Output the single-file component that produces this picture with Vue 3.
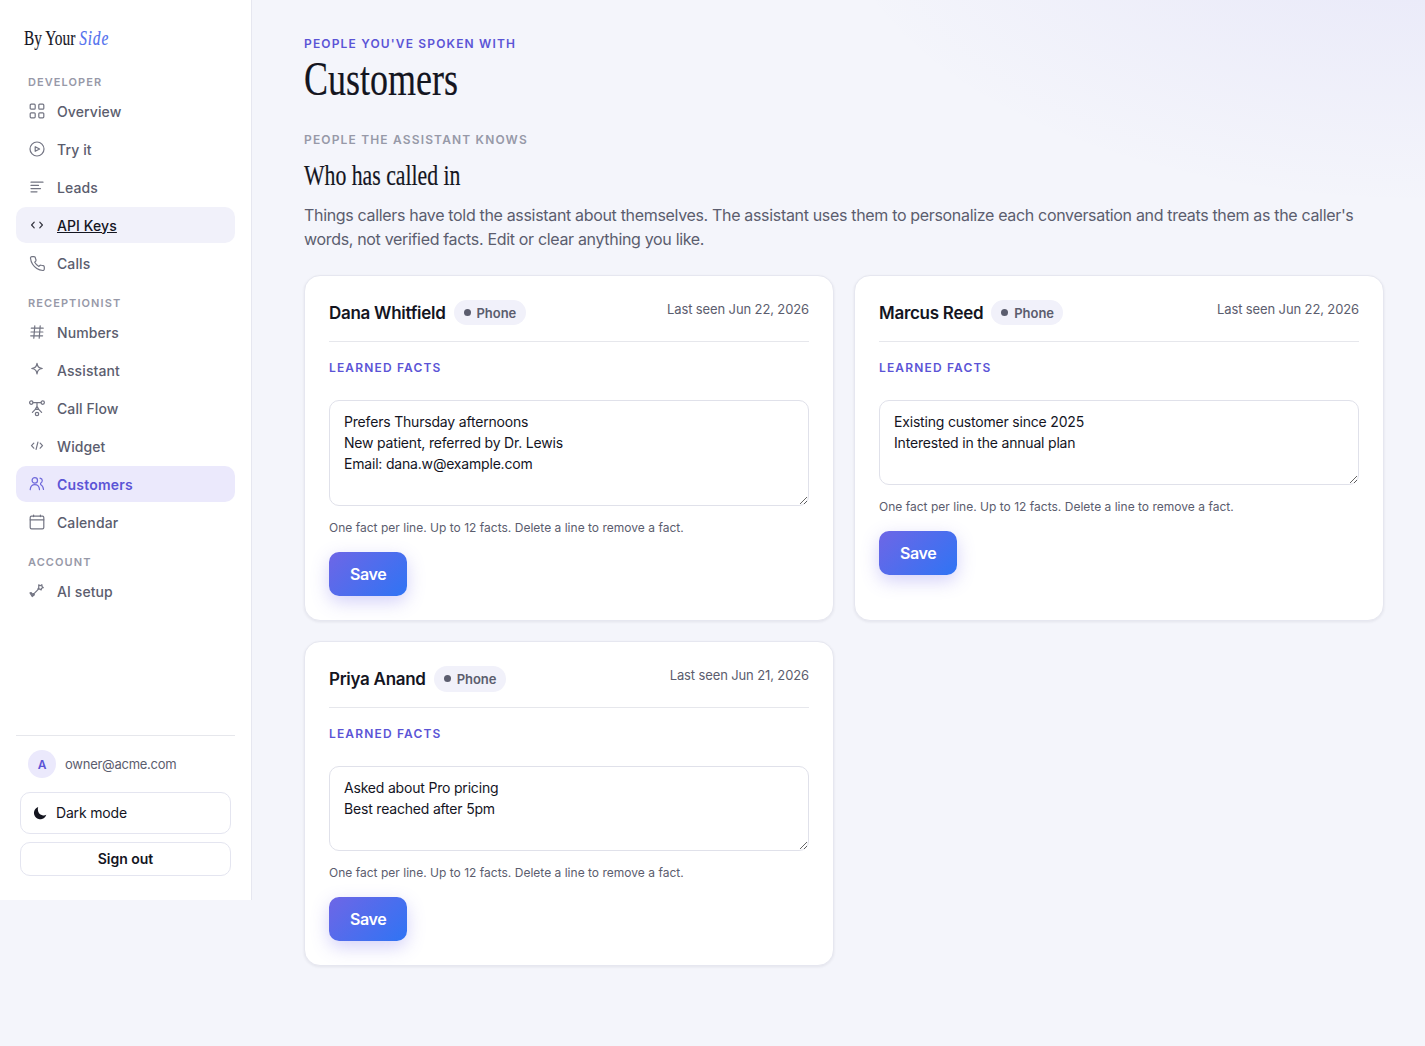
<template>
  <div class="app-shell">
    <aside class="sidebar">
      <div class="brand"><span class="brand-text">By Your <em>Side</em></span></div>

      <nav class="nav">
        <div v-for="group in navGroups" :key="group.label" class="nav-group">
          <div class="nav-label">{{ group.label }}</div>
          <a
            v-for="item in group.items"
            :key="item.name"
            class="nav-item"
            :class="{ active: item.name === current, focused: item.name === focused }"
            @click="current = item.name"
          >
            <svg class="nav-icon" viewBox="0 0 18 18" v-html="icons[item.icon]"></svg>
            <span>{{ item.name }}</span>
          </a>
        </div>
      </nav>

      <div class="account">
        <div class="account-user">
          <span class="avatar">A</span>
          <span class="email">owner@acme.com</span>
        </div>
        <button class="theme-btn">
          <svg class="moon" viewBox="0 0 14 14">
            <path d="M5.2.9A6.3 6.3 0 1 0 13.3 8.7 4.7 4.7 0 0 1 9.3 9.2C5.8 8.6 4 4.6 5.2.9z" fill="currentColor" />
          </svg>
          <span>Dark mode</span>
        </button>
        <button class="signout-btn">Sign out</button>
      </div>
    </aside>

    <main class="main">
      <div class="eyebrow">People you've spoken with</div>
      <h1><span>Customers</span></h1>
      <div class="eyebrow muted">People the assistant knows</div>
      <h2><span>Who has called in</span></h2>
      <p class="lead">
        Things callers have told the assistant about themselves. The assistant uses them to personalize each conversation and treats them as the caller's words, not verified facts. Edit or clear anything you like.
      </p>

      <div class="cards">
        <section v-for="c in customers" :key="c.name" class="card">
          <header class="card-head">
            <div class="who">
              <h3>{{ c.name }}</h3>
              <span class="pill"><i class="dot"></i>Phone</span>
            </div>
            <span class="seen">Last seen {{ c.seen }}</span>
          </header>
          <div class="facts-label">Learned facts</div>
          <textarea v-model="c.facts" :rows="c.rows" spellcheck="false"></textarea>
          <div class="hint">One fact per line. Up to 12 facts. Delete a line to remove a fact.</div>
          <button class="save-btn">Save</button>
        </section>
      </div>
    </main>
  </div>
</template>

<script setup>
import { ref } from 'vue';

const current = ref('Customers');
const focused = ref('API Keys');

const navGroups = [
  {
    label: 'Developer',
    items: [
      { name: 'Overview', icon: 'grid' },
      { name: 'Try it', icon: 'play' },
      { name: 'Leads', icon: 'lines' },
      { name: 'API Keys', icon: 'brackets' },
      { name: 'Calls', icon: 'phone' }
    ]
  },
  {
    label: 'Receptionist',
    items: [
      { name: 'Numbers', icon: 'hash' },
      { name: 'Assistant', icon: 'spark' },
      { name: 'Call Flow', icon: 'flow' },
      { name: 'Widget', icon: 'code' },
      { name: 'Customers', icon: 'people' },
      { name: 'Calendar', icon: 'calendar' }
    ]
  },
  {
    label: 'Account',
    items: [{ name: 'AI setup', icon: 'wand' }]
  }
];

const icons = {
  grid: '<rect x="2.2" y="2.2" width="5" height="5" rx="1"/><rect x="10.8" y="2.2" width="5" height="5" rx="1"/><rect x="2.2" y="10.8" width="5" height="5" rx="1"/><rect x="10.8" y="10.8" width="5" height="5" rx="1"/>',
  play: '<circle cx="9" cy="9" r="7"/><path d="M7.2 6.7v4.6L11.6 9z"/>',
  lines: '<path d="M3 4.2h12M3 7.4h7.5M3 10.6h9.5M3 13.8h6"/>',
  brackets: '<path d="M6.2 6.2 3.6 9l2.6 2.8M11.8 6.2 14.4 9l-2.6 2.8"/>',
  phone: '<path d="M16.3 13v2.1a1.4 1.4 0 0 1-1.5 1.4 13.8 13.8 0 0 1-6-2.1 13.6 13.6 0 0 1-4.2-4.2 13.8 13.8 0 0 1-2.1-6A1.4 1.4 0 0 1 3.9 2.6H6a1.4 1.4 0 0 1 1.4 1.2c.1.7.3 1.3.5 2a1.4 1.4 0 0 1-.3 1.5l-.9.9a11 11 0 0 0 4.2 4.2l.9-.9a1.4 1.4 0 0 1 1.5-.3c.6.2 1.3.4 2 .5A1.4 1.4 0 0 1 16.3 13z"/>',
  hash: '<path d="M3.3 5.2h11.9M3 9h11.9M2.7 12.8h11.9M6.8 2.8 5.8 15.2M12.2 2.8l-1 12.4"/>',
  spark: '<path d="M9 2.3C9.6 5.8 10.6 6.9 14.3 7.5 10.6 8.2 9.6 9.2 9 12.8 8.4 9.2 7.4 8.2 3.7 7.5 7.4 6.9 8.4 5.8 9 2.3z"/>',
  flow: '<circle cx="3.3" cy="3.6" r="1.7"/><circle cx="14.7" cy="3.6" r="1.7"/><circle cx="9" cy="15" r="1.7"/><path d="M5 3.6h8M9 3.6v3.8M9 7.4 7.3 10.4h3.4zM7.3 10.4 4.4 13.3M10.7 10.4l2.9 2.9"/>',
  code: '<path d="M5.8 6.2 3.5 8.7l2.3 2.5M12.2 6.2 14.5 8.7l-2.3 2.5M9.9 5.2 8.1 12.4"/>',
  people: '<circle cx="6.8" cy="5.4" r="2.7"/><path d="M2.2 14.6c.3-3.200 1.900-5 4.600-5s4.500 1.800 4.700 5M12 3.200c1.500.3 2.300 1.200 2.300 2.400 0 1.200-.6 2-1.700 2.600v1.300c1.700.9 2.700 2.500 2.900 5"/>',
  calendar: '<rect x="2.2" y="3.2" width="13.6" height="12.6" rx="1.3"/><path d="M2.2 6.8h13.6M5.6 2v1.6M12.4 2v1.6"/>',
  wand: '<path d="M4.8 12.8 10 7.6M2 10.9l1.2-.2 1 1.4 1.5-.6.7 1.3-2.2 1.7zM10.7 2.9l1.5.8 1.7-1 .1 1.8 1.3 1.1-1.7.6-.5 1.8-1.3-1.1-1.9.2.9-1.6z"/>'
};

const customers = ref([
  {
    name: 'Dana Whitfield',
    seen: 'Jun 22, 2026',
    rows: 4,
    facts: 'Prefers Thursday afternoons\nNew patient, referred by Dr. Lewis\nEmail: dana.w@example.com'
  },
  {
    name: 'Marcus Reed',
    seen: 'Jun 22, 2026',
    rows: 3,
    facts: 'Existing customer since 2025\nInterested in the annual plan'
  },
  {
    name: 'Priya Anand',
    seen: 'Jun 21, 2026',
    rows: 3,
    facts: 'Asked about Pro pricing\nBest reached after 5pm'
  }
]);
</script>

<style>
body {
  margin: 0;
  background: #f4f5fb;
}
</style>

<style scoped>
.app-shell {
  display: flex;
  align-items: flex-start;
  min-height: 1046px;
  background: radial-gradient(600px 310px at 100% -105px, rgba(91, 80, 220, 0.09), rgba(91, 80, 220, 0)) #f4f5fb;
  font-family: Inter, "Liberation Sans", sans-serif;
  color: #14151f;
  -webkit-font-smoothing: antialiased;
}

.app-shell * {
  box-sizing: border-box;
}

.sidebar {
  width: 252px;
  height: 900px;
  flex-shrink: 0;
  display: flex;
  flex-direction: column;
  padding: 24px 16px;
  background: #fff;
  border-right: 1px solid #e6e7f0;
}

.brand {
  height: 36px;
  padding-left: 8px;
  font-family: "Liberation Serif", serif;
  font-size: 22px;
  line-height: 28px;
  white-space: nowrap;
}

.brand-text {
  display: inline-block;
  transform: scaleX(0.7);
  transform-origin: left;
  -webkit-text-stroke: 0.15px currentColor;
}

.brand em {
  color: #5270ee;
  letter-spacing: 1.2px;
}

.nav-group {
  display: flex;
  flex-direction: column;
  gap: 2px;
}

.nav-label {
  padding: 14px 12px 1px;
  font-size: 11px;
  line-height: 16px;
  font-weight: 600;
  letter-spacing: 1.08px;
  text-transform: uppercase;
  color: #9799a8;
}

.nav-item {
  display: flex;
  align-items: center;
  gap: 11px;
  height: 36px;
  padding: 0 12px;
  border-radius: 10px;
  font-size: 14px;
  font-weight: 500;
  letter-spacing: 0.1px;
  color: #5b5d6e;
  cursor: pointer;
}

.nav-item.focused {
  background: #f1f1fa;
  color: #14151f;
  text-decoration: underline;
}

.nav-item.active {
  background: #ebe9fc;
  color: #5b54d6;
  font-weight: 600;
  letter-spacing: 0.2px;
}

.nav-icon {
  width: 18px;
  height: 18px;
  fill: none;
  stroke: currentColor;
  stroke-width: 1.2;
  stroke-linecap: round;
  stroke-linejoin: round;
  opacity: 0.85;
}

.account {
  margin-top: auto;
  padding: 14px 4px 0;
  border-top: 1px solid #e6e7ec;
  display: flex;
  flex-direction: column;
}

.account-user {
  display: flex;
  align-items: center;
  gap: 9px;
  padding: 0 8px;
  margin-bottom: 14px;
  font-size: 13px;
  letter-spacing: -0.25px;
  color: #5b5d6e;
}

.avatar {
  display: flex;
  align-items: center;
  justify-content: center;
  width: 28px;
  height: 28px;
  border-radius: 50%;
  background: #ebe9fc;
  color: #5b54d6;
  font-size: 12px;
  font-weight: 600;
}

button {
  font-family: inherit;
  color: inherit;
  cursor: pointer;
}

.theme-btn {
  display: flex;
  align-items: center;
  gap: 9px;
  height: 42px;
  padding: 0 12px 1px;
  margin-bottom: 8px;
  border: 1px solid #e4e5f0;
  border-radius: 10px;
  background: #fff;
  font-size: 14px;
  letter-spacing: -0.17px;
}

.moon {
  width: 14px;
  height: 14px;
}

.signout-btn {
  height: 34px;
  padding: 0 0 2px;
  border: 1px solid #e4e5f0;
  border-radius: 10px;
  background: #fff;
  font-size: 14px;
  font-weight: 600;
}

.main {
  width: 1080px;
  margin-left: 52px;
  padding-top: 35px;
}

.eyebrow,
.facts-label {
  font-size: 12px;
  line-height: 18px;
  font-weight: 600;
  letter-spacing: 1.16px;
  text-transform: uppercase;
  color: #5b54d6;
}

.eyebrow.muted {
  color: #9799a8;
}

h1,
h2 {
  margin: 0;
  font-family: "Liberation Serif", serif;
  font-weight: 400;
  white-space: nowrap;
}

h1 {
  font-size: 48px;
  line-height: 52px;
  margin-bottom: 26px;
}

h1 span,
h2 span {
  display: inline-block;
  transform: scaleX(0.75);
  transform-origin: left;
  -webkit-text-stroke: 0.2px currentColor;
}

h2 {
  margin-top: 9px;
  font-size: 29px;
  line-height: 34px;
}

.lead {
  margin: 11px 0 23.7px;
  font-size: 16px;
  line-height: 24px;
  letter-spacing: -0.33px;
  color: #5b5d6e;
}

.cards {
  display: grid;
  grid-template-columns: 1fr 1fr;
  gap: 20px;
}

.card {
  padding: 24px;
  background: #fff;
  border: 1px solid #e6e7f0;
  border-radius: 16px;
  box-shadow: 0 1px 3px rgba(20, 21, 50, 0.08);
}

.card-head {
  display: flex;
  justify-content: space-between;
  align-items: flex-start;
  height: 42.3px;
  border-bottom: 1px solid #e6e7ec;
}

.who {
  display: flex;
  align-items: center;
  gap: 8px;
}

h3 {
  margin: 0;
  font-size: 17px;
  line-height: 26px;
  font-weight: 600;
  letter-spacing: -0.28px;
}

.pill {
  display: flex;
  align-items: center;
  gap: 6px;
  height: 25.6px;
  padding: 0 9.5px 0 10px;
  border-radius: 13px;
  background: #f1f1fa;
  font-size: 13px;
  font-weight: 600;
  letter-spacing: -0.05px;
  color: #5b5d6e;
}

.dot {
  width: 7px;
  height: 7px;
  margin-top: -1px;
  border-radius: 50%;
  background: currentColor;
}

.seen {
  font-size: 13px;
  line-height: 19.5px;
  letter-spacing: -0.12px;
  color: #5b5d6e;
}

.facts-label {
  margin: 17px 0 23px;
}

textarea {
  display: block;
  width: 100%;
  padding: 10px 14px;
  border: 1px solid #e0e1ea;
  border-radius: 10px;
  background: #fff;
  font-family: inherit;
  font-size: 14px;
  line-height: 21px;
  letter-spacing: -0.19px;
  color: #14151f;
  outline: none;
}

.hint {
  margin: 12px 0 15.1px;
  font-size: 12px;
  line-height: 19px;
  letter-spacing: 0.015px;
  color: #5b5d6e;
}

.save-btn {
  display: block;
  height: 44px;
  width: 78.4px;
  border: 0;
  border-radius: 10px;
  background: linear-gradient(135deg, #6e66e6, #2f74f4);
  box-shadow: 0 6px 18px rgba(99, 91, 232, 0.28);
  color: #fff;
  font-size: 16px;
  font-weight: 600;
  letter-spacing: -0.4px;
}
</style>
